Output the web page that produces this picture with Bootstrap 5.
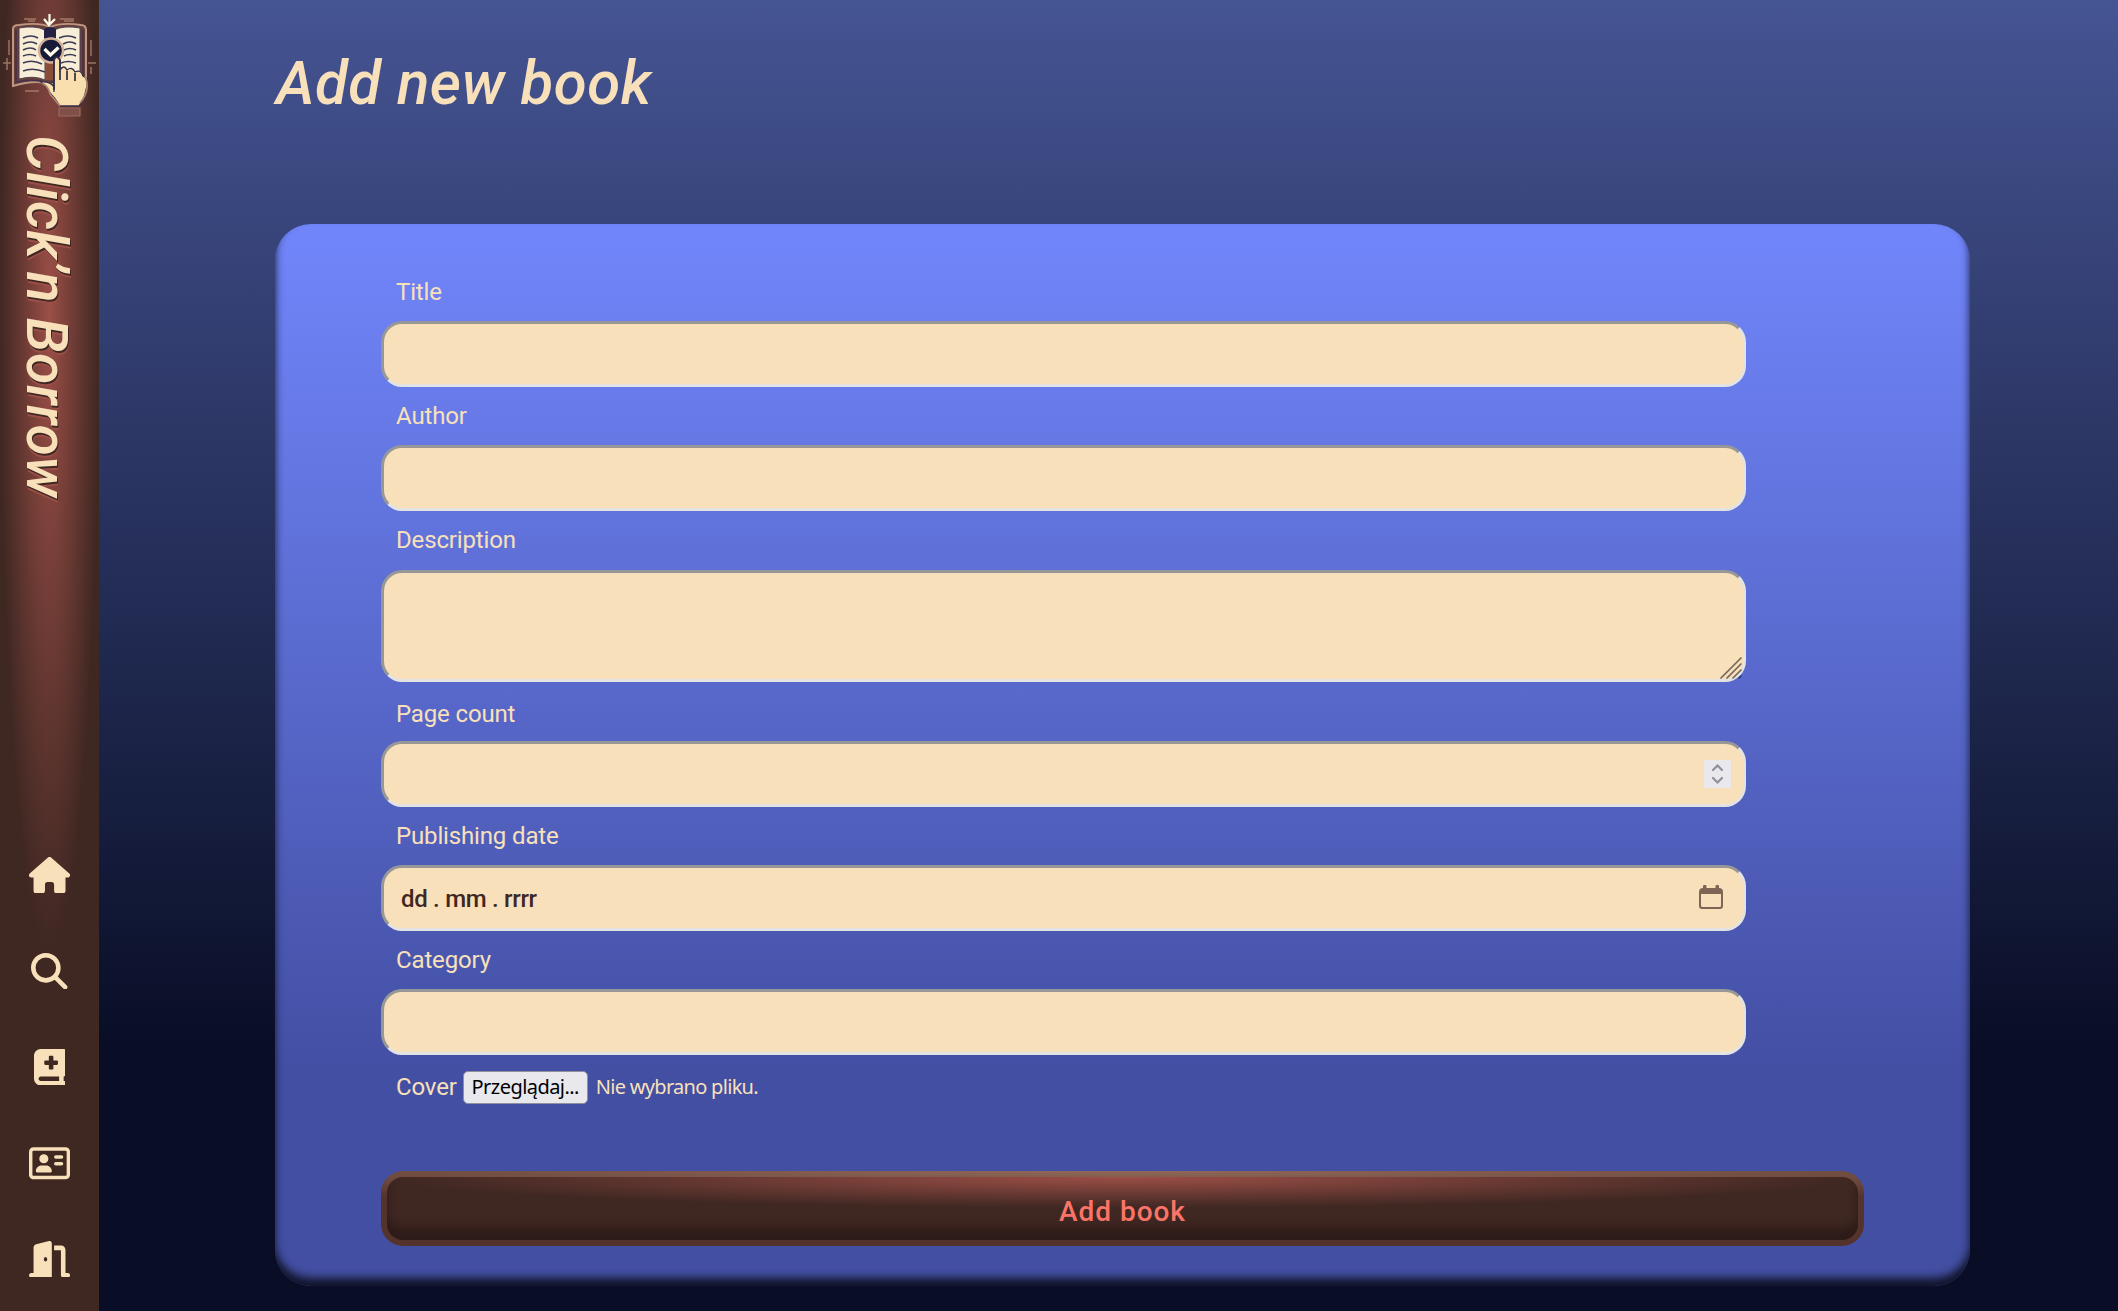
<!DOCTYPE html>
<html lang="pl">
<head>
<meta charset="utf-8">
<meta name="viewport" content="width=device-width, initial-scale=1">
<title>Click'n Borrow</title>
<link href="https://cdn.jsdelivr.net/npm/bootstrap@5.3.0/dist/css/bootstrap.min.css" rel="stylesheet">
<style>
:root{--cream:#f8e0bb;--brown:#3f2722;--rust:#9b4f47}
body{height:1311px;overflow:hidden;font-family:Roboto,sans-serif;color:var(--cream);background:linear-gradient(#455493,#090e26 80%)}
.side-rail{width:99px;height:1311px;padding:10px 0 34px;background:radial-gradient(50px 640px at 50% 315px,var(--rust),var(--brown))}
.brand-name{writing-mode:vertical-rl;font:italic 500 57px/66px Roboto,sans-serif;letter-spacing:.55px;height:380px;margin-top:15px;margin-right:7px;white-space:nowrap;text-shadow:2px -1px 0 var(--brown),4px -1px 0 var(--rust)}
.side-links{gap:59.5px}
.side-links a{color:var(--cream);height:36.5px}
.side-links svg{height:36.5px;display:block;fill:currentColor}
.page-area{padding:38px 148px 25px 176px}
.page-title{font:italic 500 60px/84px Roboto,sans-serif;letter-spacing:.5px;height:186px;padding:4px 0 0 1px;white-space:nowrap}
.book-panel{height:1062px;border-radius:36px;padding:47px 106px 0;background:linear-gradient(#7186fb,#434fa3 80%);box-shadow:inset 0 -8px 8px #11152a}
.book-fields{width:1365px}
.book-fields .form-label{font-size:24px;line-height:40px;height:50px;padding:1px 0 0 15px;letter-spacing:-.15px}
.book-fields .form-control{height:66px;border:3px solid;border-color:#979797 #e3e3e3 #e3e3e3 #979797;border-radius:21px;background:var(--cream);color:var(--brown);font:500 24px/30px Roboto,sans-serif;letter-spacing:-.3px;padding:2px 17px 0}
.book-fields textarea.form-control{height:112px;resize:none}
.field-block{height:124px}
.field-block.tall{height:172px}
.field-block.tall .form-label{height:51px}
.field-block.tall + .field-block .form-label{padding-top:3px}
.step-box{right:15px;top:19px;width:27px;height:28px;background:#e9e9ed}
.cal-mark{right:23px;top:20px}
.grip-mark{right:4px;bottom:3px}
.cover-line{height:40px;margin-top:4px;padding-left:15px;font-size:24px;letter-spacing:-.15px}
.browse-btn{height:33px;width:125px;margin-left:6px;padding:0;border:1px solid #8f8f9d;border-radius:5px;background:#e9e9ed;color:#000;font:20px/30px "Noto Sans",sans-serif;letter-spacing:-.55px}
.no-file{font:20px/30px "Noto Sans",sans-serif;letter-spacing:-.7px;margin-left:8px}
.add-btn{height:75px;margin-top:64px;border:6px solid transparent;border-radius:22px;color:#fb7467;font:500 28px/60px Roboto,sans-serif;letter-spacing:.95px;padding:5px 0 0;position:relative;
background:radial-gradient(740px 31px at 50% 0,var(--rust),var(--brown)) padding-box,radial-gradient(1400px 30px at 50% 0,#8f6858,#55332d) border-box}
.add-btn::after{content:"";position:absolute;inset:0;border-radius:16px;box-shadow:inset 0 -12px 8px #2e1c19}
.add-btn:hover{color:#fb7467}
</style>
</head>
<body>
<div class="d-flex">
<nav class="side-rail d-flex flex-column align-items-center flex-shrink-0">
 <svg width="99" height="110" viewBox="0 10 99 110">
  <g fill="none" stroke="#b9937c" stroke-width="1.5" opacity=".7"><path d="M24 19h12M60 19h14M28 21h7M64 21h10M3 63h8M7 58v12M9 40v15M88 63h8M91 40v16M91 67v7M25 91h14"/></g>
  <path d="M13 29q0-4 6-4 20-3 31 2 12-5 31-2 5 0 5 5v53q-23-5-36 1-14-5-37 2z" fill="#674139" stroke="#bd9783" stroke-width="2"/>
  <path d="M16 30v52q18-4 33 1 17-5 34-1V30" fill="none" stroke="#46304a" stroke-width="1.5"/>
  <path d="M19 28q16-3 26 2v50q-11-5-26-1zM80 28q-16-3-26 2v50q11-5 26-1z" fill="#f8edd6" stroke="#504158" stroke-width="1"/>
  <path d="M45 28v52h9V28z" fill="#894d38"/><path d="M44 29q6-4 12 0v9H44z" fill="#242142"/>
  <g fill="none" stroke="#3b3b55" stroke-width="1.6"><path d="M23 38q8-4 15 0M23 44q8-4 14 0M23 50q8-4 13 0M23 56q7-3 13 0M23 63q9-4 19 1M23 71q10-4 22 1M59 38q9-4 17 0M63 44q7-4 13 0M64 50q6-3 12 0M64 56q6-3 12 0M61 63q7-3 15 0"/></g>
  <circle cx="51" cy="50.500" r="12" fill="#171b38" stroke="#d4b19b" stroke-width="2.500"/>
  <path d="M44.500 49l6 6 8-7.500" fill="none" stroke="#fffbed" stroke-width="3.200"/>
  <path d="M49.500 14v10M44 19l5 6 6-6" fill="none" stroke="#fffbed" stroke-width="2.200"/>
  <path d="M54 92V60q2.500-6 6 0v10q4-6 7 0 5-4 8 2 6-3 8 4 5 1 4 10l-3 12-5 8H60q-5-8-10-13-3-7-9-11 9-1 13 5z" fill="#f9dfae" stroke="#37304a" stroke-width="1.300"/>
  <path d="M54 90V60q2.500-6 6 0v20M67 71v9M75 73v8" fill="none" stroke="#322e48" stroke-width="1.700"/>
  <path d="M85 76q6 14-5 27M42 83q7 4 8 11l10 12" fill="none" stroke="#ad8875" stroke-width="1.700"/>
  <path d="M59 108h21v8H59z" fill="#805048" stroke="#9a6a5c" stroke-width="1.200"/>
 </svg>
 <div class="brand-name">Click’n Borrow</div>
 <div class="side-links d-flex flex-column align-items-center mt-auto">
  <a href="#"><svg viewBox="0 0 576 512"><path d="M575.8 255.5c0 18-15 32.100-32 32.100h-32l.7 160.200c0 2.700-.2 5.400-.5 8.100V472c0 22.100-17.900 40-40 40H392c-22.100 0-40-17.900-40-40V384c0-17.700-14.300-32-32-32H256c-17.700 0-32 14.300-32 32v88c0 22.100-17.900 40-40 40H104c-22.100 0-40-17.900-40-40V287.600H32c-18 0-32-14-32-32.100 0-9 3-17 10-24L266.400 8c7-7 15-8 22-8s15 2 21 7L564.800 231.500c8 7 12 15 11 24z"/></svg></a>
  <a href="#"><svg viewBox="0 0 512 512"><path d="M416 208c0 45.900-14.900 88.300-40 122.700L502.600 457.400c12.500 12.500 12.500 32.800 0 45.300s-32.800 12.500-45.300 0L330.700 376c-34.400 25.200-76.800 40-122.700 40C93.100 416 0 322.900 0 208S93.100 0 208 0S416 93.100 416 208zM208 352a144 144 0 1 0 0-288 144 144 0 1 0 0 288z"/></svg></a>
  <a href="#"><svg viewBox="0 0 448 512"><path d="M0 96C0 43 43 0 96 0H416c17.700 0 32 14.300 32 32V352c0 17.700-14.300 32-32 32v64c17.700 0 32 14.300 32 32s-14.300 32-32 32H96c-53 0-96-43-96-96V96zM64 416c0 17.700 14.300 32 32 32H352V384H96c-17.700 0-32 14.300-32 32zM208 112v48H160c-8.800 0-16 7.200-16 16v32c0 8.800 7.200 16 16 16h48v48c0 8.800 7.200 16 16 16h32c8.800 0 16-7.200 16-16V224h48c8.800 0 16-7.200 16-16V176c0-8.800-7.200-16-16-16H272V112c0-8.800-7.200-16-16-16H224c-8.800 0-16 7.200-16 16z"/></svg></a>
  <a href="#"><svg viewBox="0 0 576 512"><path d="M512 80c8.800 0 16 7.200 16 16V416c0 8.800-7.200 16-16 16H64c-8.800 0-16-7.200-16-16V96c0-8.800 7.200-16 16-16H512zM64 32C28.700 32 0 60.700 0 96V416c0 35.300 28.700 64 64 64H512c35.300 0 64-28.700 64-64V96c0-35.300-28.700-64-64-64H64zM208 256a64 64 0 1 0 0-128 64 64 0 1 0 0 128zm-32 32c-44.200 0-80 35.800-80 80 0 8.800 7.200 16 16 16H304c8.800 0 16-7.200 16-16 0-44.200-35.800-80-80-80H176zM376 144c-13.300 0-24 10.700-24 24s10.700 24 24 24h80c13.300 0 24-10.700 24-24s-10.700-24-24-24H376zm0 96c-13.300 0-24 10.700-24 24s10.700 24 24 24h80c13.300 0 24-10.700 24-24s-10.700-24-24-24H376z"/></svg></a>
  <a href="#"><svg viewBox="0 0 576 512"><path d="M320 32c0-9.900-4.500-19.200-12.300-25.200S289.800-1.400 280.200 1l-179.900 45C79 51.300 64 70.500 64 92.500V448H32c-17.700 0-32 14.300-32 32s14.300 32 32 32H320V32zM256 256c0 17.700-10.700 32-24 32s-24-14.300-24-32 10.700-32 24-32 24 14.300 24 32zm96-128h96V480c0 17.700 14.300 32 32 32h64c17.700 0 32-14.300 32-32s-14.300-32-32-32H512V128c0-35.300-28.700-64-64-64H352v64z"/></svg></a>
 </div>
</nav>
<main class="page-area flex-grow-1">
 <h1 class="page-title m-0">Add new book</h1>
 <form class="book-panel">
  <div class="book-fields">
   <div class="field-block"><label class="form-label d-block m-0" for="f1">Title</label><input id="f1" class="form-control" type="text"></div>
   <div class="field-block"><label class="form-label d-block m-0" for="f2">Author</label><input id="f2" class="form-control" type="text"></div>
   <div class="field-block tall"><label class="form-label d-block m-0" for="f3">Description</label>
    <div class="position-relative"><textarea id="f3" class="form-control"></textarea><svg class="grip-mark position-absolute" width="22" height="23" viewBox="0 0 22 23" stroke="#75685a" stroke-width="1.700" stroke-linecap="round"><path d="M1 22L21 2M7 22L21 8M13 22L21 14"/><path d="M19 22l2-2" stroke="#303a68"/></svg></div></div>
   <div class="field-block"><label class="form-label d-block m-0" for="f4">Page count</label>
    <div class="position-relative"><input id="f4" class="form-control" type="text"><div class="step-box position-absolute d-flex"><svg width="27" height="28" fill="none" stroke="#8f8f9d" stroke-width="2.200" stroke-linecap="round"><path d="M9 10l4.500-4.500L18 10M9 18l4.500 4.500L18 18"/></svg></div></div></div>
   <div class="field-block"><label class="form-label d-block m-0" for="f5">Publishing date</label>
    <div class="position-relative"><input id="f5" class="form-control" type="text" value="dd . mm . rrrr"><svg class="cal-mark position-absolute" width="24" height="24" viewBox="0 0 24 24" fill="#7e6656"><path fill-rule="evenodd" d="M4 3V1.500a1.500 1.500 0 0 1 3.500 0V3h9V1.500a1.500 1.500 0 0 1 3.500 0V3q4 0 4 4v14q0 3-3 3H3q-3 0-3-3V7q0-4 4-4zM2 9v11.500q0 1.500 1.500 1.500h17q1.500 0 1.500-1.500V9z"/></svg></div></div>
   <div class="field-block"><label class="form-label d-block m-0" for="f6">Category</label><input id="f6" class="form-control" type="text"></div>
  </div>
  <div class="cover-line d-flex align-items-center"><span>Cover</span><button type="button" class="browse-btn">Przeglądaj...</button><span class="no-file">Nie wybrano pliku.</span></div>
  <button type="button" class="add-btn btn w-100 d-block">Add book</button>
 </form>
</main>
</div>
<script src="https://cdn.jsdelivr.net/npm/bootstrap@5.3.0/dist/js/bootstrap.bundle.min.js"></script>
</body>
</html>
